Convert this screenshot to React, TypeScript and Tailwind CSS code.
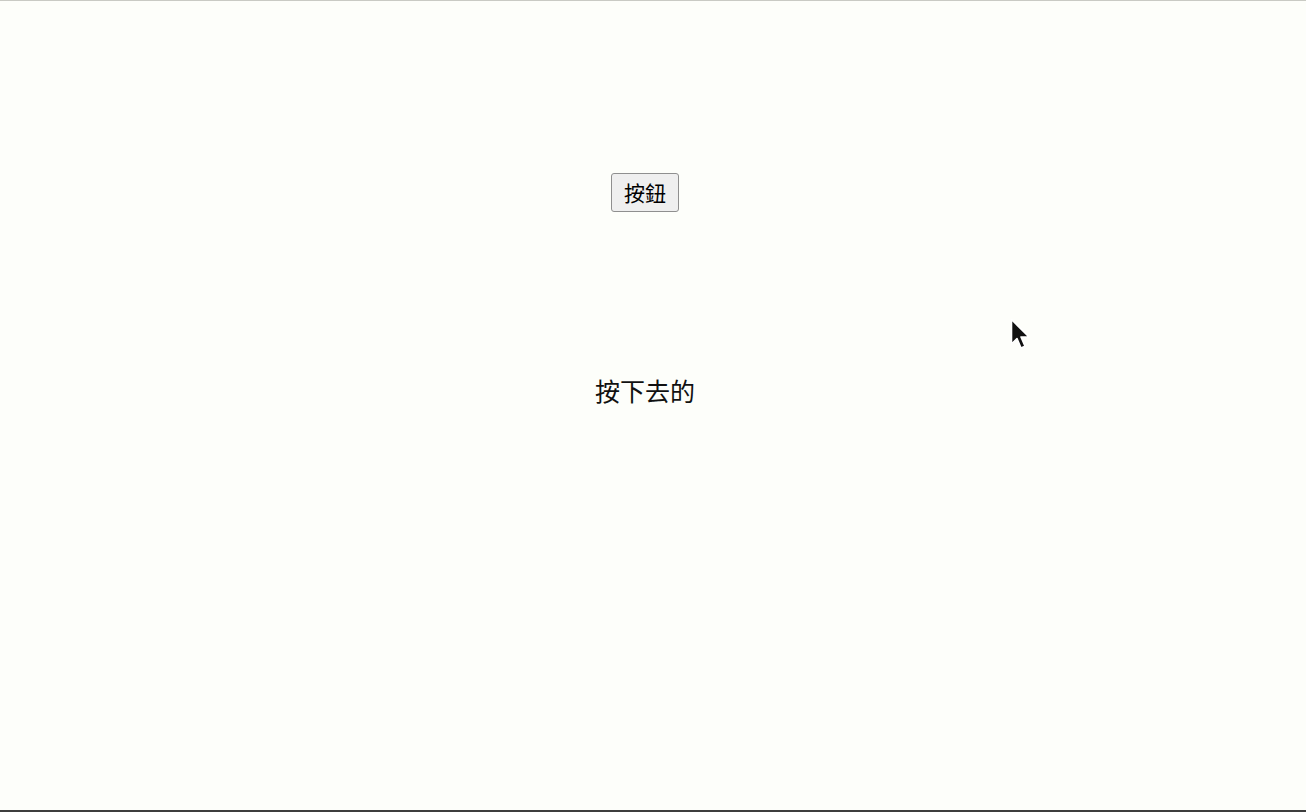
import React from 'react';

export default function App() {
  return (
    <div className="relative w-[1306px] h-[812px] bg-[#fdfefa] border-t border-t-[#c9cac4] border-b-2 border-b-[#3d3d3d] overflow-hidden" style={{ fontFamily: '"Noto Sans CJK TC", "Noto Sans CJK SC", sans-serif' }}>
      <div className="w-[1290px] flex flex-col items-center pt-[172px]">
        <button className="h-[39px] w-[68px] text-[21px] leading-none text-black bg-[#efefef] border border-[#8f8f8f] rounded-[3px]">
          按鈕
        </button>
        <p className="mt-[166px] text-[25px] leading-none text-[#111]">按下去的</p>
      </div>
      <svg className="absolute left-[1008px] top-[316px]" width="26" height="36" viewBox="0 0 26 36">
        <path d="M3.5 2.5 L3.5 27 L9 21.5 L13 31 L17 29.3 L13 20 L21 20 Z" fill="#111" stroke="#fff" strokeWidth="1.6" strokeLinejoin="round" />
      </svg>
    </div>
  );
}
